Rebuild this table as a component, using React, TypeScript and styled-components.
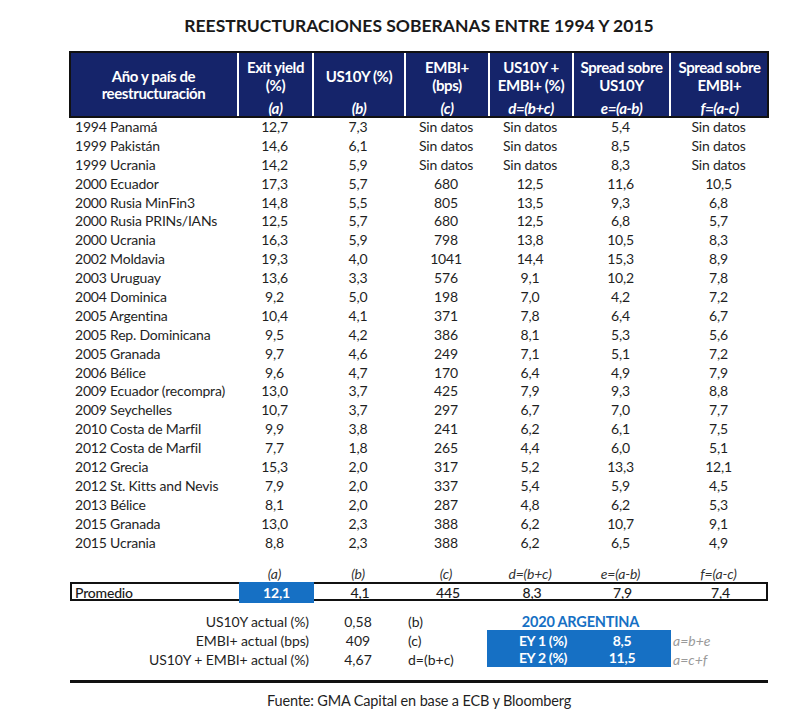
import React from "react";
import styled, { createGlobalStyle } from "styled-components";

const Global = createGlobalStyle`
  html, body { margin: 0; padding: 0; background: #fff; }
  body { font-family: Lato, "Open Sans", sans-serif; color: #1f1f1f; }
`;

const COLS = "167px 75px 92px 84px 84px 97px 99px";
const NAVY = "#15246a";
const BLUE = "#1670c4";

const Page = styled.div`
  width: 800px;
  height: 728px;
  padding: 16px 0 0 70px;
  box-sizing: border-box;
`;

const Sheet = styled.div`
  width: 698px;
  display: flex;
  flex-direction: column;
`;

const Title = styled.h1`
  margin: 0 0 16px;
  text-align: center;
  font-size: 17.5px;
  line-height: 20px;
  font-weight: 700;
  color: #1a1a1a;
`;

const Header = styled.div`
  display: grid;
  grid-template-columns: ${COLS};
  background: ${NAVY};
  outline: 2px solid #111;
  outline-offset: -1px;
  height: 65px;
  color: #fff;
  font-weight: 700;
  font-size: 15px;
  letter-spacing: -0.4px;
`;

const HeadCell = styled.div<{ $first?: boolean }>`
  display: flex;
  flex-direction: column;
  justify-content: ${(p) => (p.$first ? "center" : "flex-start")};
  align-items: center;
  text-align: center;
  border-left: ${(p) => (p.$first ? "none" : "2px solid #fff")};
  line-height: ${(p) => (p.$first ? "17px" : "18px")};
  white-space: nowrap;
`;

const HeadTop = styled.div`
  height: 48px;
  display: flex;
  flex-direction: column;
  justify-content: center;
`;

const HeadFormula = styled.div`
  height: 17px;
  line-height: 17px;
  font-style: italic;
`;

const Row = styled.div`
  display: grid;
  grid-template-columns: ${COLS};
  height: 18.9px;
  align-items: center;
  font-size: 14px;
`;

const Cell = styled.div<{ $left?: boolean }>`
  text-align: ${(p) => (p.$left ? "left" : "center")};
  padding-left: ${(p) => (p.$left ? "5px" : "0")};
  white-space: nowrap;
  letter-spacing: -0.2px;
`;

const Body = styled.div`
  display: flex;
  flex-direction: column;
`;

const FormulaRow = styled(Row)`
  margin-top: 14px;
  height: 17px;
  font-style: italic;
  color: #333;
`;

const AvgRow = styled.div`
  display: grid;
  grid-template-columns: ${COLS};
  height: 19px;
  align-items: stretch;
  border: 2px solid #111;
  box-sizing: border-box;
  font-size: 14px;
`;

const AvgCell = styled.div<{ $hl?: boolean; $left?: boolean }>`
  display: flex;
  align-items: center;
  justify-content: ${(p) => (p.$left ? "flex-start" : "center")};
  padding-left: ${(p) => (p.$left ? "3px" : "0")};
  background: ${(p) => (p.$hl ? BLUE : "transparent")};
  color: ${(p) => (p.$hl ? "#fff" : "#1a1a1a")};
  font-weight: ${(p) => (p.$hl ? 700 : 500)};
  margin: ${(p) => (p.$hl ? "-2px 0" : "0")};
  letter-spacing: -0.2px;
`;

const Lower = styled.div`
  display: grid;
  grid-template-columns: ${COLS};
  grid-template-rows: 19px 19px 19px;
  margin-top: 11px;
  font-size: 14px;
  align-items: center;
`;

const LowLabel = styled.div<{ $row: number }>`
  grid-column: 1 / 3;
  grid-row: ${(p) => p.$row};
  text-align: right;
  padding-right: 3px;
  letter-spacing: -0.1px;
`;

const LowVal = styled.div<{ $row: number }>`
  grid-column: 3;
  grid-row: ${(p) => p.$row};
  text-align: center;
`;

const LowRef = styled.div<{ $row: number }>`
  grid-column: 4;
  grid-row: ${(p) => p.$row};
  padding-left: 4px;
`;

const ArgTitle = styled.div`
  grid-column: 5 / 7;
  grid-row: 1;
  text-align: center;
  color: ${BLUE};
  font-weight: 700;
  font-size: 14.5px;
  letter-spacing: -0.2px;
  margin-right: -4px;
`;

const ArgBox = styled.div`
  grid-column: 5 / 7;
  grid-row: 2 / 4;
  align-self: stretch;
  margin: -1px -2px 2px -1px;
  background: ${BLUE};
  display: grid;
  grid-template-columns: 112px 46px;
  align-content: center;
  color: #fff;
  font-weight: 700;
  line-height: 17px;
`;

const BoxCell = styled.div`
  text-align: center;
  letter-spacing: -0.3px;
`;

const Note = styled.div<{ $row: number }>`
  grid-column: 7;
  grid-row: ${(p) => p.$row};
  font-style: italic;
  color: #9a9a9a;
  padding-left: 4px;
`;

const Rule = styled.div`
  height: 3px;
  background: #111;
  margin-top: 11px;
`;

const Source = styled.div`
  text-align: center;
  font-size: 14.5px;
  line-height: 18px;
  margin-top: 9px;
  letter-spacing: -0.15px;
`;

const rows: string[][] = [
  ["1994 Panamá", "12,7", "7,3", "Sin datos", "Sin datos", "5,4", "Sin datos"],
  ["1999 Pakistán", "14,6", "6,1", "Sin datos", "Sin datos", "8,5", "Sin datos"],
  ["1999 Ucrania", "14,2", "5,9", "Sin datos", "Sin datos", "8,3", "Sin datos"],
  ["2000 Ecuador", "17,3", "5,7", "680", "12,5", "11,6", "10,5"],
  ["2000 Rusia MinFin3", "14,8", "5,5", "805", "13,5", "9,3", "6,8"],
  ["2000 Rusia PRINs/IANs", "12,5", "5,7", "680", "12,5", "6,8", "5,7"],
  ["2000 Ucrania", "16,3", "5,9", "798", "13,8", "10,5", "8,3"],
  ["2002 Moldavia", "19,3", "4,0", "1041", "14,4", "15,3", "8,9"],
  ["2003 Uruguay", "13,6", "3,3", "576", "9,1", "10,2", "7,8"],
  ["2004 Dominica", "9,2", "5,0", "198", "7,0", "4,2", "7,2"],
  ["2005 Argentina", "10,4", "4,1", "371", "7,8", "6,4", "6,7"],
  ["2005 Rep. Dominicana", "9,5", "4,2", "386", "8,1", "5,3", "5,6"],
  ["2005 Granada", "9,7", "4,6", "249", "7,1", "5,1", "7,2"],
  ["2006 Bélice", "9,6", "4,7", "170", "6,4", "4,9", "7,9"],
  ["2009 Ecuador (recompra)", "13,0", "3,7", "425", "7,9", "9,3", "8,8"],
  ["2009 Seychelles", "10,7", "3,7", "297", "6,7", "7,0", "7,7"],
  ["2010 Costa de Marfil", "9,9", "3,8", "241", "6,2", "6,1", "7,5"],
  ["2012 Costa de Marfil", "7,7", "1,8", "265", "4,4", "6,0", "5,1"],
  ["2012 Grecia", "15,3", "2,0", "317", "5,2", "13,3", "12,1"],
  ["2012 St. Kitts and Nevis", "7,9", "2,0", "337", "5,4", "5,9", "4,5"],
  ["2013 Bélice", "8,1", "2,0", "287", "4,8", "6,2", "5,3"],
  ["2015 Granada", "13,0", "2,3", "388", "6,2", "10,7", "9,1"],
  ["2015 Ucrania", "8,8", "2,3", "388", "6,2", "6,5", "4,9"],
];

const headers: { top: string[]; f: string }[] = [
  { top: ["Exit yield", "(%)"], f: "(a)" },
  { top: ["US10Y (%)"], f: "(b)" },
  { top: ["EMBI+", "(bps)"], f: "(c)" },
  { top: ["US10Y +", "EMBI+ (%)"], f: "d=(b+c)" },
  { top: ["Spread sobre", "US10Y"], f: "e=(a-b)" },
  { top: ["Spread sobre", "EMBI+"], f: "f=(a-c)" },
];

const formulas = ["(a)", "(b)", "(c)", "d=(b+c)", "e=(a-b)", "f=(a-c)"];
const avg = ["12,1", "4,1", "445", "8,3", "7,9", "7,4"];
const actual = [
  ["US10Y actual (%)", "0,58", "(b)"],
  ["EMBI+ actual (bps)", "409", "(c)"],
  ["US10Y + EMBI+ actual (%)", "4,67", "d=(b+c)"],
];

export default function App() {
  return (
    <>
      <Global />
      <Page>
        <Sheet>
          <Title>REESTRUCTURACIONES SOBERANAS ENTRE 1994 Y 2015</Title>
          <Header>
            <HeadCell $first>
              <div>Año y país de</div>
              <div>reestructuración</div>
            </HeadCell>
            {headers.map((h, i) => (
              <HeadCell key={i}>
                <HeadTop>
                  {h.top.map((t) => (
                    <div key={t}>{t}</div>
                  ))}
                </HeadTop>
                <HeadFormula>{h.f}</HeadFormula>
              </HeadCell>
            ))}
          </Header>
          <Body>
            {rows.map((r) => (
              <Row key={r[0]}>
                {r.map((c, j) => (
                  <Cell key={j} $left={j === 0}>
                    {c}
                  </Cell>
                ))}
              </Row>
            ))}
          </Body>
          <FormulaRow>
            <Cell />
            {formulas.map((f) => (
              <Cell key={f}>{f}</Cell>
            ))}
          </FormulaRow>
          <AvgRow>
            <AvgCell $left>Promedio</AvgCell>
            {avg.map((v, i) => (
              <AvgCell key={i} $hl={i === 0}>
                {v}
              </AvgCell>
            ))}
          </AvgRow>
          <Lower>
            {actual.map((a, i) => (
              <React.Fragment key={a[0]}>
                <LowLabel $row={i + 1}>{a[0]}</LowLabel>
                <LowVal $row={i + 1}>{a[1]}</LowVal>
                <LowRef $row={i + 1}>{a[2]}</LowRef>
              </React.Fragment>
            ))}
            <ArgTitle>2020 ARGENTINA</ArgTitle>
            <ArgBox>
              <BoxCell>EY 1 (%)</BoxCell>
              <BoxCell>8,5</BoxCell>
              <BoxCell>EY 2 (%)</BoxCell>
              <BoxCell>11,5</BoxCell>
            </ArgBox>
            <Note $row={2}>a=b+e</Note>
            <Note $row={3}>a=c+f</Note>
          </Lower>
          <Rule />
          <Source>Fuente: GMA Capital en base a ECB y Bloomberg</Source>
        </Sheet>
      </Page>
    </>
  );
}
